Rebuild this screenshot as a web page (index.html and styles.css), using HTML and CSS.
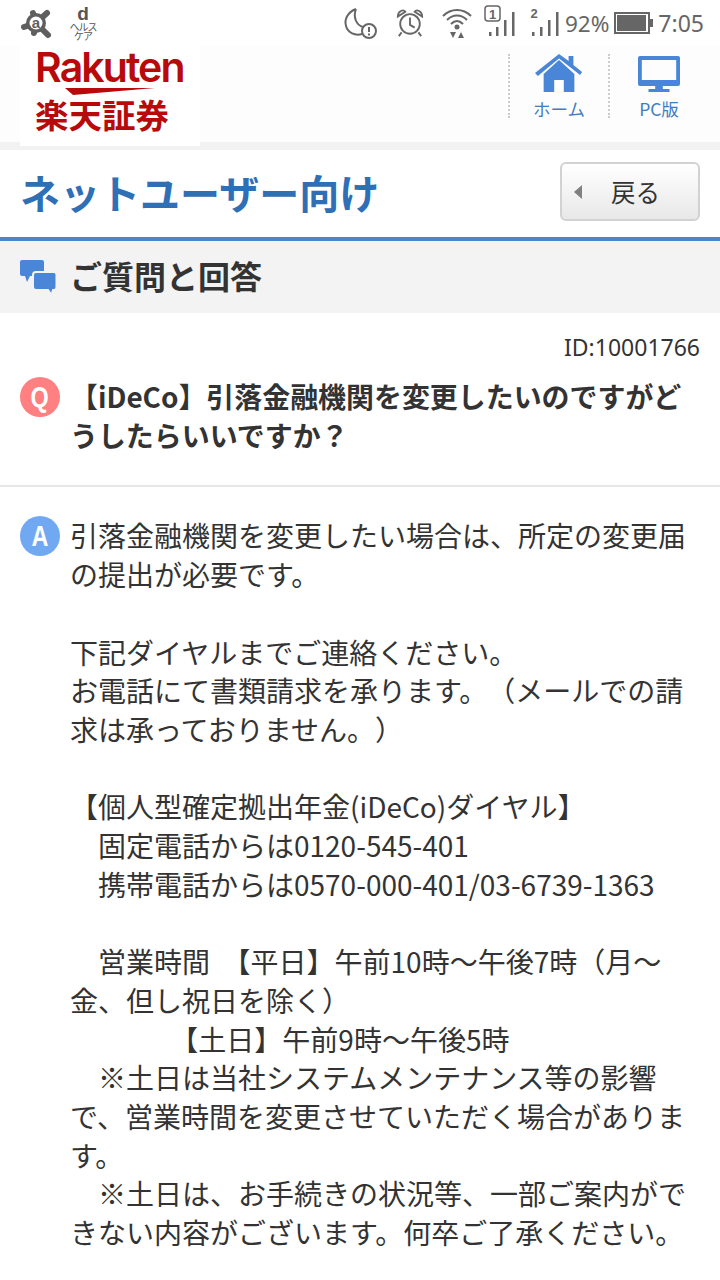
FILE: index.html
```html
<!DOCTYPE html>
<html lang="ja">
<head>
  <meta charset="UTF-8" />
  <title>ご質問と回答</title>
  <link rel="stylesheet" href="styles.css">
</head>
<body>

  <!-- Status Bar -->
  <div class="statusbar">
    <svg width="34" height="34" viewBox="0 0 34 34">
      <g stroke="#5f5f5f" stroke-width="6" stroke-linecap="round">
        <path d="M16 17 L27 7 M16 17 L4 21 M16 17 L28 29 M16 17 L13 7 M16 17 L14 27"/>
      </g>
      <circle cx="16" cy="17" r="10" fill="#5f5f5f"/>
      <circle cx="16" cy="17" r="6.500" fill="#fff"/>
      <text x="16" y="22" text-anchor="middle" class="st-a">a</text>
    </svg>
    <div class="st-dhealth">
      <span class="st-d">d</span>
      <span class="st-dtext">ヘルスケア</span>
    </div>
    <div class="st-spacer"></div>
    <svg width="34" height="34" viewBox="0 0 34 34" fill="none" stroke="#666" stroke-width="2">
      <path d="M13 3 C5 6 1 13 3 20 C5 27 12 30 19 28 M13 3 C10 11 13 19 20 21"/>
      <circle cx="26" cy="25" r="7" fill="#fff"/>
      <path d="M26 21 V26 M26 27.500 V29.500"/>
    </svg>
    <svg class="st-alarm" width="28" height="30" viewBox="0 0 30 32" fill="none" stroke="#666" stroke-width="2">
      <circle cx="15" cy="17" r="10.500"/>
      <path d="M15 10 V18 L20 21 M2 9 C2 3 8 1 10 4 Z M28 9 C28 3 22 1 20 4 Z M6 26 L3 30 M24 26 L27 30"/>
    </svg>
    <svg class="st-wifi" width="30" height="32" viewBox="0 0 30 32" fill="none" stroke="#666" stroke-width="2">
      <path d="M1 9 C9 1 21 1 29 9 M5 13 C11 7 19 7 25 13 M9 17 C13 13 17 13 21 17"/>
      <circle cx="15" cy="20" r="2.500" fill="#666" stroke="none"/>
      <path d="M8 25 H14 L11 31Z M16 31 H22 L19 25Z" fill="#666" stroke="none"/>
    </svg>
    <svg class="st-sig1" width="34" height="36" viewBox="0 0 34 36">
      <rect x="1" y="1" width="15" height="15" rx="3" fill="none" stroke="#666" stroke-width="1.500"/>
      <text x="8.500" y="13.500" text-anchor="middle" class="st-simnum">1</text>
      <path fill="#666" d="M5 27 h2.500 v4 h-2.500Z M12 22 h2.500 v9 h-2.500Z M20 15 h2.500 v16 h-2.500Z M28 7 h2.500 v24 h-2.500Z"/>
    </svg>
    <svg class="st-sig2" width="30" height="36" viewBox="0 0 30 36">
      <text x="4" y="13" text-anchor="middle" class="st-simnum">2</text>
      <path fill="#666" d="M2 27 h2.500 v4 h-2.500Z M10 22 h2.500 v9 h-2.500Z M18 15 h2.500 v16 h-2.500Z M26 7 h2.500 v24 h-2.500Z"/>
    </svg>
    <span class="st-pct">92%</span>
    <div class="st-battery"><div class="st-battery-in"></div></div>
    <span class="st-time">7:05</span>
  </div>

  <!-- Header -->
  <div class="header">
    <div class="logo">
      <span class="logo-en">Rakuten</span>
      <svg class="logo-swoosh" width="92" height="8" viewBox="0 0 92 8"><path fill="#b80a0a" d="M0 0 H90 L8 7Z"/></svg>
      <span class="logo-jp">楽天証券</span>
    </div>
    <div class="nav">
      <div class="nav-item">
        <svg width="48" height="38" viewBox="0 0 50 38" preserveAspectRatio="none">
          <path fill="#4a86d8" d="M9 20 L25 6 L41 20 V38 H30 V26 H20 V38 H9Z"/>
          <path fill="#4a86d8" d="M0 19 L25 0 L35 7 V2 H40 V11 L49 18 L47 21 L25 4.500 L3 22Z"/>
        </svg>
        <span>ホーム</span>
      </div>
      <div class="nav-item">
        <svg width="42" height="38" viewBox="0 -2 44 38" preserveAspectRatio="none">
          <path fill="#4a86d8" fill-rule="evenodd" d="M2 0 H42 Q44 0 44 2 V28 Q44 30 42 30 H2 Q0 30 0 28 V2 Q0 0 2 0Z M4 4 V24 H40 V4Z"/>
          <path fill="#4a86d8" d="M18 30 H26 V33 H33 V36 H11 V33 H18Z"/>
        </svg>
        <span>PC版</span>
      </div>
    </div>
  </div>

  <!-- Title -->
  <div class="titlebar">
    <h1>ネットユーザー向け</h1>
    <div class="backbtn"><i class="back-arrow"></i><span>戻る</span></div>
  </div>

  <!-- Section -->
  <div class="section">
    <svg width="37" height="34" viewBox="0 0 37 34">
      <path fill="#4a86d8" d="M2 0 H22 Q24 0 24 2 V14 Q24 16 22 16 H10 L7 22 L5 16 H2 Q0 16 0 14 V2 Q0 0 2 0Z"/>
      <path fill="#4a86d8" stroke="#f3f3f3" stroke-width="2" d="M16 12 H34 Q36.500 12 36.500 15 V27 Q36.500 30 34 30 H33 L31.500 35 L28 30 H16 Q13 30 13 27 V15 Q13 12 16 12Z"/>
    </svg>
    <h2>ご質問と回答</h2>
  </div>

  <div class="idline">ID:10001766</div>

  <div class="qa question">
    <div class="badge"><span>Q</span></div>
    <p>【iDeCo】引落金融機関を変更したいのですがどうしたらいいですか？</p>
  </div>

  <div class="qa answer">
    <div class="badge"><span>A</span></div>
    <p>引落金融機関を変更したい場合は、所定の変更届の提出が必要です。

下記ダイヤルまでご連絡ください。
お電話にて書類請求を承ります。（メールでの請求は承っておりません。）

【個人型確定拠出年金(iDeCo)ダイヤル】
　固定電話からは0120-545-401
　携帯電話からは0570-000-401/03-6739-1363

　営業時間&nbsp;&nbsp;【平日】午前10時～午後7時（月～金、但し祝日を除く）
&nbsp;&nbsp;&nbsp;&nbsp;&nbsp;&nbsp;&nbsp;&nbsp;&nbsp;&nbsp;&nbsp;&nbsp;&nbsp;&nbsp;&nbsp;&nbsp;【土日】午前9時～午後5時
　※土日は当社システムメンテナンス等の影響で、営業時間を変更させていただく場合があります。
　※土日は、お手続きの状況等、一部ご案内ができない内容がございます。何卒ご了承ください。</p>
  </div>

</body>
</html>
```

FILE: styles.css
```css
* {
  margin: 0; padding: 0;
  box-sizing: border-box;
}
html, body {
  height: 1280px;
  overflow: hidden;
}
body {
  background-color: white;
  color: #333;
  font-family: "Noto Sans CJK JP", "Noto Sans", sans-serif;
  text-spacing-trim: space-all;
}
svg {
  display: block;
  flex: none;
}

/* status bar */
.statusbar {
  height: 46px;
  display: flex;
  align-items: center;
  padding: 0 16px 0 20px;
  color: #666;
}
.st-a {
  font-family: "Liberation Sans", sans-serif;
  font-size: 15px;
  font-weight: bold;
  fill: #5f5f5f;
}
.st-dhealth {
  margin-left: 15px;
  width: 28px;
  display: flex;
  flex-direction: column;
  align-items: center;
  color: #555;
}
.st-d {
  font-family: "Liberation Sans", sans-serif;
  font-size: 19px;
  font-weight: bold;
  line-height: 16px;
}
.st-dtext {
  width: 28px;
  text-align: center;
  font-size: 10px;
  line-height: 9px;
  letter-spacing: -1px;
}
.st-spacer {
  flex: 1;
}
.st-alarm { margin-left: 19px; }
.st-wifi { margin-left: 18px; }
.st-sig1 { margin-left: 12px; }
.st-sig2 { margin-left: 12px; }
.st-simnum {
  font-family: "Liberation Sans", sans-serif;
  font-size: 13px;
  font-weight: bold;
  fill: #666;
}
.st-pct, .st-time {
  font-family: "Noto Sans", sans-serif;
  font-size: 23px;
  color: #666;
}
.st-pct {
  margin-left: 5px;
  font-size: 22.500px;
}
.st-battery {
  width: 36px;
  height: 22px;
  margin-left: 5px;
  border: 2px solid #666;
  padding: 1px;
  position: relative;
}
.st-battery::after {
  content: "";
  position: absolute;
  right: -5px;
  top: 5px;
  width: 3px;
  height: 8px;
  background: #666;
}
.st-battery-in {
  height: 100%;
  width: 96%;
  background: #666;
}
.st-time { margin-left: 8px; }

/* header */
.header {
  height: 104px;
  display: flex;
  justify-content: space-between;
  padding: 0 12px 0 20px;
  background: #fdfdfd;
  border-bottom: 8px solid #f2f2f2;
}
.logo {
  width: 180px;
  height: 100px;
  background: white;
  padding: 2px 0 0 15px;
  color: #b80a0a;
  display: flex;
  flex-direction: column;
}
.logo-en {
  font-family: "Inter", sans-serif;
  font-size: 41px;
  font-weight: 600;
  letter-spacing: -1.900px;
  line-height: 38px;
}
.logo-swoosh {
  margin: 2px 0 0 30px;
}
.logo-jp {
  font-size: 33.500px;
  font-weight: bold;
  line-height: 36px;
}
.nav {
  display: flex;
  height: 64px;
  margin-top: 8px;
}
.nav-item {
  width: 100px;
  border-left: 2px dotted #ccc;
  display: flex;
  flex-direction: column;
  align-items: center;
  font-size: 17.500px;
  line-height: 24px;
  color: #3f7cc4;
  gap: 5px;
}

/* title */
.titlebar {
  height: 91px;
  display: flex;
  align-items: center;
  justify-content: space-between;
  padding: 0 20px;
  border-bottom: 4px solid #4a86d0;
}
.titlebar h1 {
  font-size: 40px;
  font-weight: bold;
  color: #2f6fb6;
  margin-bottom: 4px;
}
.backbtn {
  width: 140px;
  height: 59px;
  margin-bottom: 4px;
  border: 2px solid #d2d2d2;
  border-radius: 6px;
  background: linear-gradient(#ffffff, #e8e8e8);
  display: flex;
  align-items: center;
  padding-left: 12px;
  font-size: 24.500px;
  color: #333;
}
.back-arrow {
  width: 0;
  height: 0;
  border-top: 7px solid transparent;
  border-bottom: 7px solid transparent;
  border-right: 8px solid #808080;
  margin-right: 29px;
}

/* section */
.section {
  height: 72px;
  display: flex;
  align-items: center;
  gap: 13px;
  padding-left: 20px;
  background: #f3f3f3;
}
.section h2 {
  font-size: 32px;
  font-weight: bold;
  color: #333;
  margin-top: -4px;
}

.idline {
  text-align: right;
  padding: 16px 20px 0;
  font-size: 23px;
  line-height: 36px;
  font-family: "Noto Sans", sans-serif;
}

/* question and answer */
.qa {
  display: flex;
  gap: 10px;
  padding: 0 20px;
  font-size: 28px;
  line-height: 38.700px;
}
.qa p {
  width: 630px;
}
.question {
  padding-top: 12px;
  padding-bottom: 31px;
  border-bottom: 2px solid #e6e6e6;
  font-weight: bold;
  font-size: 27.950px;
}
.question .badge {
  background: #ff8080;
}
.answer {
  padding-top: 29px;
}
.answer p {
  white-space: pre-line;
}
.answer .badge {
  background: #70a9f2;
}
.badge {
  width: 40px;
  height: 40px;
  flex: none;
  border-radius: 50%;
  color: white;
  font-family: "Liberation Sans", sans-serif;
  font-size: 30px;
  font-weight: bold;
  line-height: 40px;
  text-align: center;
}
.badge span {
  display: inline-block;
  transform: scaleX(.78);
}
```
